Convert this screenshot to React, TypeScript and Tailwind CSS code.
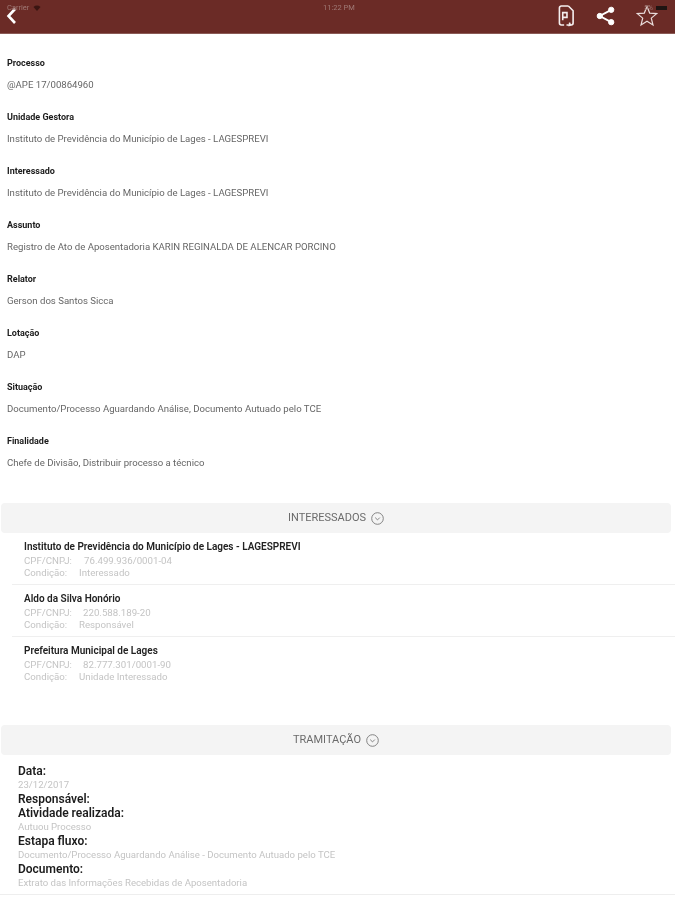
import React from "react";

const fields = [
  ["Processo", "@APE 17/00864960"],
  ["Unidade Gestora", "Instituto de Previdência do Município de Lages - LAGESPREVI"],
  ["Interessado", "Instituto de Previdência do Município de Lages - LAGESPREVI"],
  ["Assunto", "Registro de Ato de Aposentadoria KARIN REGINALDA DE ALENCAR PORCINO"],
  ["Relator", "Gerson dos Santos Sicca"],
  ["Lotação", "DAP"],
  ["Situação", "Documento/Processo Aguardando Análise, Documento Autuado pelo TCE"],
  ["Finalidade", "Chefe de Divisão, Distribuir processo a técnico"],
];

const interessados = [
  ["Instituto de Previdência do Município de Lages - LAGESPREVI", "76.499.936/0001-04", "Interessado"],
  ["Aldo da Silva Honório", "220.588.189-20", "Responsável"],
  ["Prefeitura Municipal de Lages", "82.777.301/0001-90", "Unidade Interessado"],
];

const tramitacao = [
  ["Data:", "23/12/2017"],
  ["Responsável:", ""],
  ["Atividade realizada:", "Autuou Processo"],
  ["Estapa fluxo:", "Documento/Processo Aguardando Análise - Documento Autuado pelo TCE"],
  ["Documento:", "Extrato das Informações Recebidas de Aposentadoria"],
];

function SectionHeader({ title }: { title: string }) {
  return (
    <div className="h-[30px] ml-[1px] mr-[4px] rounded-[4px] bg-[#f4f4f4] flex items-center justify-center gap-[5px] text-[11px] text-[#6b6b6b]">
      <span className="mt-[1px]">{title}</span>
      <svg width="13" height="13" viewBox="0 0 13 13" fill="none" stroke="#777777" strokeWidth="0.9">
        <circle cx="6.5" cy="6.5" r="5.8" />
        <path d="M4.2 5.6 6.5 7.9 8.8 5.6" />
      </svg>
    </div>
  );
}

export default function App() {
  return (
    <div className="w-[675px] h-[900px] overflow-hidden bg-white font-['Roboto',sans-serif] blur-[0.5px]">
      <div className="relative h-[34px] bg-[#6b2b26] border-b border-[#8a5a55] flex items-center justify-between pl-[6px] pr-[17px]">
        <div className="absolute left-[7px] top-[2px] flex items-center gap-[4px] text-[7.500px] text-[#a07a76]">
          <span>Carrier</span>
          <svg width="8" height="6" viewBox="0 0 7 6" fill="#3a1512">
            <path d="M0 2a5 5 0 0 1 7 0L3.5 6z" />
          </svg>
        </div>
        <span className="absolute left-[323px] top-[2px] text-[7.500px] text-[#a07a76]">11:22 PM</span>
        <div className="absolute right-[8px] top-[3px] flex items-center gap-[3px] text-[7px] text-[#a07a76]">
          <span>5%</span>
          <div className="w-[11px] h-[4px] bg-[#1f1412]" />
        </div>
        <svg width="11" height="18" viewBox="0 0 11 18" fill="none" stroke="#ffffff" strokeWidth="2.6" className="mt-[-1px]">
          <path d="M9 2 2.5 9 9 16" />
        </svg>
        <div className="flex items-center gap-[21px] mt-[-2px]">
          <svg width="17" height="23" viewBox="0 0 18 23" fill="none" stroke="#f4eeee" strokeWidth="1.7">
            <path d="M11 1.500H3.500a2 2 0 0 0-2 2v16a2 2 0 0 0 2 2h3M11 1.500l5 5v13a2 2 0 0 1-2 2h-2" />
            <path d="M5 8.500h4.500v5H5zM5 13.500v3" />
            <path d="M9 21.500h3M12 19l1 2.500-2 1" />
          </svg>
          <svg width="19" height="20" viewBox="0 0 20 21" fill="#ffffff" stroke="#ffffff">
            <circle cx="16" cy="4" r="2.8" />
            <circle cx="4" cy="10.5" r="2.8" />
            <circle cx="16" cy="17" r="2.8" />
            <path d="M16 4 4 10.500 16 17" fill="none" strokeWidth="2" />
          </svg>
          <svg width="22" height="22" viewBox="0 0 22 22" fill="none" stroke="#e9dcdb" strokeWidth="1.2">
            <path d="M11 1.500l2.700 6.600 7 .5-5.400 4.500 1.700 6.900-6-3.800-6 3.800 1.700-6.900L1.300 8.600l7-.5z" />
          </svg>
        </div>
      </div>

      <div className="pl-[7px] pt-[20px]">
        {fields.map(([label, value]) => (
          <div key={label} className="h-[54px]">
            <p className="h-[19px] text-[9px] leading-[19px] font-bold text-[#1c1c1c]">{label}</p>
            <p className="mt-[2px] h-[19px] text-[9.600px] leading-[19px] text-[#666666]">{value}</p>
          </div>
        ))}
      </div>

      <div className="mt-[17px]">
        <SectionHeader title="INTERESSADOS" />
        <div className="pl-[12px]">
          {interessados.map(([name, doc, cond], i) => (
            <div key={doc} className="h-[52px] border-b border-[#efefef] pl-[12px] pt-[8px] text-[9.700px] leading-[12px] last:border-b-0">
              <p className="mb-[2px] text-[10px] font-semibold text-[#222222]">{name}</p>
              <p className="text-[#c4c4c4] flex">
                <span className={i === 0 ? "w-[60px]" : "w-[59px]"}>CPF/CNPJ:</span>
                <span>{doc}</span>
              </p>
              <p className="text-[#c4c4c4] flex">
                <span className="w-[55px]">Condição:</span>
                <span>{cond}</span>
              </p>
            </div>
          ))}
        </div>
      </div>

      <div className="mt-[36px]">
        <SectionHeader title="TRAMITAÇÃO" />
        <div className="pl-[18px] pt-[9px] pb-[4px] border-b border-[#eeeeee]">
          {tramitacao.map(([label, value]) => (
            <div key={label}>
              <p className="h-[14px] text-[12px] leading-[14px] font-semibold text-[#1c1c1c]">{label}</p>
              {value && <p className="h-[14px] text-[9.600px] leading-[14px] text-[#c4c4c4]">{value}</p>}
            </div>
          ))}
        </div>
      </div>
    </div>
  );
}
